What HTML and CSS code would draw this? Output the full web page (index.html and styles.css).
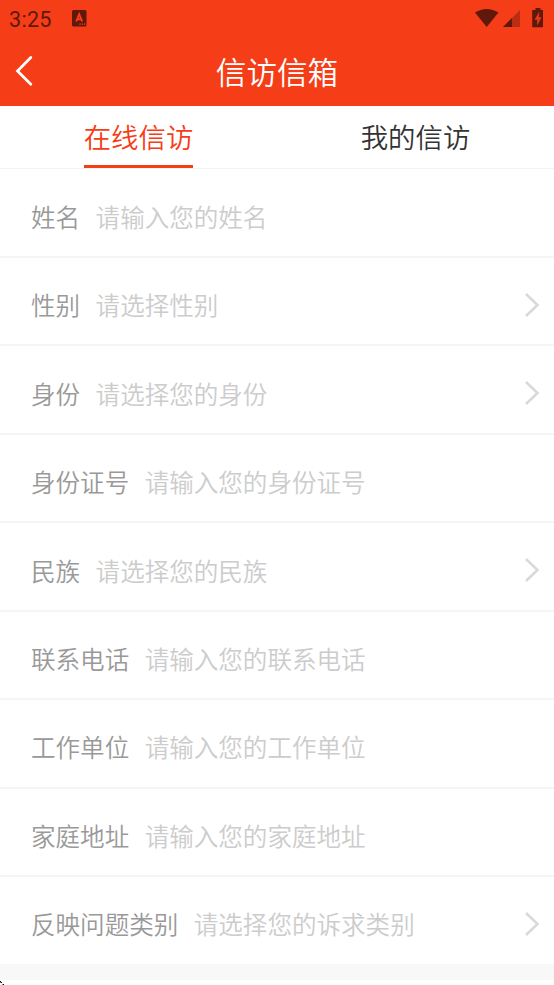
FILE: index.html
```html
<!DOCTYPE html>
<html lang="zh-CN">
<head>
<meta charset="utf-8">
<title>信访信箱</title>
<link rel="stylesheet" href="styles.css">
</head>
<body>
<header class="header">
  <div class="status">
    <span class="time">3:25</span>
    <svg class="app-icon" width="15" height="17" viewBox="0 0 15 17"><rect width="14.5" height="16.5" rx="1.5" fill="#5f180a"/><path d="M4.2 11.5 7.2 4.2 10.2 11.5M5.2 9.2h4" fill="none" stroke="#f73e19" stroke-width="1.9"/><path d="M7.3 14.2h1.4M9.7 14.2h1.4M12.1 14.2h1.3" stroke="#f73e19" stroke-width="1.2"/></svg>
    <svg class="signals" width="70" height="20" viewBox="0 0 70 20">
      <path d="M0 4.6Q11.5-2.8 23.5 4.6L11.7 19Z" fill="#5f180a"/>
      <path d="M45 2V19H28Z" fill="#b92e13"/><path d="M37 10V19H28Z" fill="#5f180a"/>
      <path d="M60.5 0h5v2H68v17.2H57.2V2h3.3Z" fill="#5f180a"/><path d="M64 4.5 60 11.5h2.5v5l3.5-7h-2.5Z" fill="#e53a18" stroke="#e53a18" stroke-width="0.6"/>
    </svg>
  </div>
  <div class="navbar">
    <svg class="back" width="18" height="30" viewBox="0 0 18 30"><path d="M15.8 1.5 2.5 15 15.8 28.2" fill="none" stroke="#fff" stroke-width="2.7" stroke-linecap="round"/></svg>
    <h1 class="title">信访信箱</h1>
  </div>
</header>
<nav class="tabs">
  <div class="tab"><span class="tab-label active">在线信访</span></div>
  <div class="tab"><span class="tab-label">我的信访</span></div>
</nav>
<main class="form">
  <div class="row"><span class="label">姓名</span><span class="hint">请输入您的姓名</span></div>
  <div class="row"><span class="label">性别</span><span class="hint">请选择性别</span><svg class="chevron" viewBox="0 0 16 26"><path d="M2 2 13.5 13 2 24"/></svg></div>
  <div class="row"><span class="label">身份</span><span class="hint">请选择您的身份</span><svg class="chevron" viewBox="0 0 16 26"><path d="M2 2 13.5 13 2 24"/></svg></div>
  <div class="row"><span class="label">身份证号</span><span class="hint">请输入您的身份证号</span></div>
  <div class="row"><span class="label">民族</span><span class="hint">请选择您的民族</span><svg class="chevron" viewBox="0 0 16 26"><path d="M2 2 13.5 13 2 24"/></svg></div>
  <div class="row"><span class="label">联系电话</span><span class="hint">请输入您的联系电话</span></div>
  <div class="row"><span class="label">工作单位</span><span class="hint">请输入您的工作单位</span></div>
  <div class="row"><span class="label">家庭地址</span><span class="hint">请输入您的家庭地址</span></div>
  <div class="row last"><span class="label">反映问题类别</span><span class="hint">请选择您的诉求类别</span><svg class="chevron" viewBox="0 0 16 26"><path d="M2 2 13.5 13 2 24"/></svg></div>
</main>
<div class="band"></div>
<footer class="foot"><svg width="4" height="4" viewBox="0 0 4 4" shape-rendering="crispEdges"><path d="M0 0h1v1H0zM1 1h1v1H1zM3 3h1v1H3z" fill="#000"/><path d="M0 1h1v1H0zM2 3h1v1H2z" fill="#888"/></svg></footer>
</body>
</html>
```
FILE: styles.css
```css
* { box-sizing: border-box; }
body {
  margin: 0;
  height: 985px;
  overflow: hidden;
  display: flex;
  flex-direction: column;
  background: #fff;
  font-family: "Noto Sans CJK SC", sans-serif;
  font-weight: 350;
}
svg { display: block; flex: none; }
.header { height: 106px; flex: none; background: #f53d18; color: #fff; }
.status { display: flex; height: 38px; padding: 0 9px; }
.time {
  width: 63px;
  font: 400 21.5px/39px Roboto, sans-serif;
  letter-spacing: 0.3px;
  color: #5f180a;
}
.app-icon { margin-top: 10px; }
.signals { margin: 8px 0 0 auto; }
.navbar { display: flex; height: 68px; padding: 0 15px; }
.back { margin-top: 18px; }
.title {
  flex: 1;
  margin: 0 18px 0 0;
  font-size: 30.6px;
  font-weight: 350;
  line-height: 66px;
  text-align: center;
}
.tabs {
  display: flex;
  flex: none;
  height: 63px;
  border-bottom: 1px solid #f3f3f3;
}
.tab { flex: 1; display: flex; justify-content: center; }
.tab-label {
  height: 62px;
  font-size: 27.4px;
  line-height: 60px;
  color: #333;
}
.active { color: #f53d18; border-bottom: 3px solid #f53d18; }
.form { flex: none; height: 795px; padding-top: 0.6px; }
.row {
  display: flex;
  align-items: center;
  height: 88.45px;
  padding: 8px 14px 0 31px;
  border-bottom: 2px solid #f5f5f5;
  font-size: 24.55px;
  line-height: 36px;
}
.last { border-bottom-color: transparent; }
.label { color: #999; margin-right: 15.5px; }
.hint { color: #ccc; }
.chevron { width: 16px; height: 26px; margin: -1px 0 0 auto; fill: none; stroke: #d9d9d9; stroke-width: 2.5; }
.band { flex: none; height: 16px; background: #f8f8f8; }
.foot { padding-top: 1px; }
```
